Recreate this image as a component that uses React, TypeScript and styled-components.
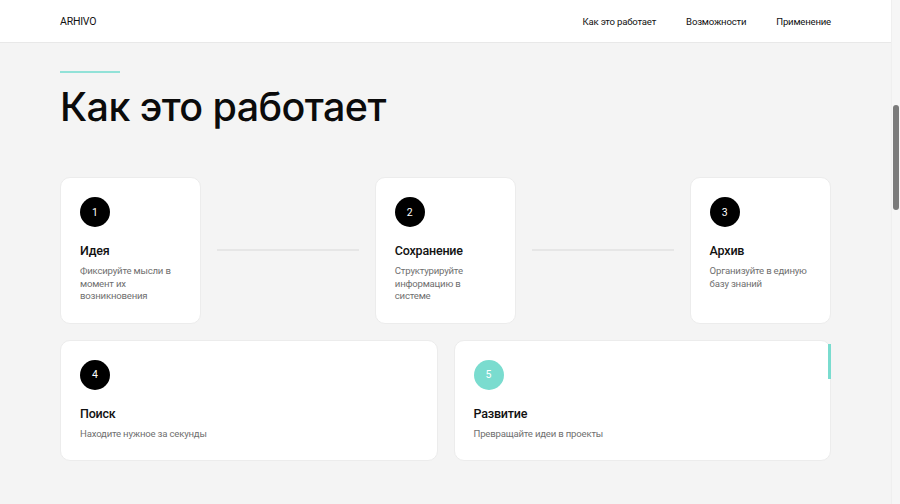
import styled, { createGlobalStyle } from "styled-components";

const GlobalStyle = createGlobalStyle`
  html, body {
    margin: 0;
    padding: 0;
    background: #f4f4f4;
    font-family: Roboto, "Noto Sans", sans-serif;
    color: #111;
    overflow: hidden;
  }
  * { box-sizing: border-box; }
`;

const Page = styled.div`
  width: 891px;
  min-height: 504px;
  background: #f4f4f4;
`;

const Header = styled.header`
  height: 43px;
  background: #fff;
  border-bottom: 1px solid #e8e8e8;
  display: flex;
  align-items: center;
  justify-content: space-between;
  padding: 0 60px;
`;

const Logo = styled.div`
  font-size: 10.5px;
  letter-spacing: -0.2px;
  font-weight: 400;
  color: #111;
`;

const Nav = styled.nav`
  display: flex;
  gap: 30px;
`;

const NavLink = styled.a`
  font-size: 9.6px;
  letter-spacing: -0.2px;
  color: #111;
  text-decoration: none;
`;

const Main = styled.main`
  padding: 28px 60px 0;
`;

const Accent = styled.div`
  width: 60px;
  height: 2px;
  background: #92e2d8;
`;

const Title = styled.h1`
  margin: 10px 0 0;
  font-family: Inter, "Noto Sans", sans-serif;
  font-size: 39.5px;
  font-weight: 500;
  letter-spacing: -0.6px;
  line-height: 48px;
  color: #0b0b0b;
`;

const Steps = styled.div<{ cols: number }>`
  display: grid;
  grid-template-columns: repeat(${(p) => p.cols}, 1fr);
  gap: 16px;
  align-items: stretch;
`;

const TopSteps = styled(Steps)`
  margin-top: 46px;
`;

const BottomSteps = styled(Steps)`
  margin-top: 16px;
`;

const Card = styled.div`
  position: relative;
  background: #fff;
  border: 1px solid #ececec;
  border-radius: 10px;
  padding: 19px 19px 20px;
  display: flex;
  flex-direction: column;
`;

const Badge = styled.div<{ accent?: boolean }>`
  width: 30px;
  height: 30px;
  border-radius: 50%;
  background: ${(p) => (p.accent ? "#7adccf" : "#000")};
  color: #fff;
  font-size: 10.5px;
  display: flex;
  align-items: center;
  justify-content: center;
`;

const StepTitle = styled.h3`
  margin: 15px 0 0;
  font-size: 12.5px;
  font-weight: 500;
  letter-spacing: -0.2px;
  line-height: 17px;
  color: #111;
`;

const StepText = styled.p`
  margin: 6px 0 0;
  font-size: 9.6px;
  letter-spacing: -0.2px;
  line-height: 12.5px;
  color: #6f6f6f;
`;

const Connector = styled.div`
  align-self: center;
  height: 2px;
  background: #e6e6e6;
`;

const ActiveMark = styled.span`
  position: absolute;
  right: -1px;
  top: 3px;
  width: 3px;
  height: 35px;
  background: #7adccf;
`;

const ScrollTrack = styled.div`
  position: fixed;
  top: 0;
  right: 0;
  width: 9px;
  height: 504px;
  background: #f6f6f6;
  border-left: 1px solid #efefef;
`;

const ScrollThumb = styled.div`
  margin: 105px 0 0 1px;
  width: 6px;
  height: 105px;
  border-radius: 3px;
  background: #7b7b7b;
`;

type Step = { n: number; title: string; text: string; active?: boolean };

const top: Step[] = [
  { n: 1, title: "Идея", text: "Фиксируйте мысли в момент их возникновения" },
  { n: 2, title: "Сохранение", text: "Структурируйте информацию в системе" },
  { n: 3, title: "Архив", text: "Организуйте в единую базу знаний" },
];

const bottom: Step[] = [
  { n: 4, title: "Поиск", text: "Находите нужное за секунды" },
  { n: 5, title: "Развитие", text: "Превращайте идеи в проекты", active: true },
];

const StepCard = ({ step }: { step: Step }) => (
  <Card>
    <Badge accent={step.active}>{step.n}</Badge>
    <StepTitle>{step.title}</StepTitle>
    <StepText>{step.text}</StepText>
    {step.active && <ActiveMark />}
  </Card>
);

export default function App() {
  return (
    <Page>
      <GlobalStyle />
      <Header>
        <Logo>ARHIVO</Logo>
        <Nav>
          <NavLink href="#how">Как это работает</NavLink>
          <NavLink href="#features">Возможности</NavLink>
          <NavLink href="#usage">Применение</NavLink>
        </Nav>
      </Header>
      <Main>
        <Accent />
        <Title>Как это работает</Title>
        <TopSteps cols={5}>
          <StepCard step={top[0]} />
          <Connector />
          <StepCard step={top[1]} />
          <Connector />
          <StepCard step={top[2]} />
        </TopSteps>
        <BottomSteps cols={2}>
          {bottom.map((s) => (
            <StepCard key={s.n} step={s} />
          ))}
        </BottomSteps>
      </Main>
      <ScrollTrack>
        <ScrollThumb />
      </ScrollTrack>
    </Page>
  );
}
